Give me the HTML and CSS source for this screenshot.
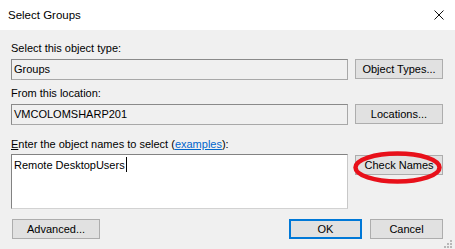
FILE: index.html
```html
<!DOCTYPE html>
<html lang="en">
<head>
  <meta charset="UTF-8">
  <title>Select Groups</title>
  <link rel="stylesheet" href="styles.css">
</head>
<body>
  <div class="window">
    <div class="titlebar">
      <span class="title">Select Groups</span>
      <svg class="close" width="10" height="10" viewBox="0 0 10 10">
        <path d="M0.5 0.5 L9.5 9.5 M9.5 0.5 L0.5 9.5" stroke="#111" stroke-width="1" fill="none"/>
      </svg>
    </div>

    <div class="content">
      <div class="label label-first">Select this object type:</div>
      <div class="row">
        <div class="field readonly">Groups</div>
        <button class="btn">Object Types...</button>
      </div>

      <div class="label label-second">From this location:</div>
      <div class="row">
        <div class="field readonly">VMCOLOMSHARP201</div>
        <button class="btn">Locations...</button>
      </div>

      <div class="label label-third"><u>E</u>nter the object names to select (<a href="#">examples</a>):</div>
      <div class="row row-names">
        <div class="field names">Remote DesktopUsers<span class="caret"></span></div>
        <div class="check-wrap">
          <button class="btn">Check Names</button>
          <svg class="highlight" width="90" height="33" viewBox="0 0 90 33">
            <ellipse cx="44.5" cy="16.5" rx="42" ry="14" fill="none" stroke="#e8101a" stroke-width="4.5"/>
          </svg>
        </div>
      </div>

      <div class="footer">
        <button class="btn advanced">Advanced...</button>
        <div class="actions">
          <button class="btn small ok">OK</button>
          <button class="btn small">Cancel</button>
        </div>
      </div>
    </div>

    <svg class="grip" width="12" height="9" viewBox="0 0 12 9">
      <rect x="8" y="1" width="2" height="2" fill="#b8b8b8"/>
      <rect x="5" y="4" width="2" height="2" fill="#b8b8b8"/>
      <rect x="8" y="4" width="2" height="2" fill="#b8b8b8"/>
      <rect x="2" y="7" width="2" height="2" fill="#b8b8b8"/>
      <rect x="5" y="7" width="2" height="2" fill="#b8b8b8"/>
      <rect x="8" y="7" width="2" height="2" fill="#b8b8b8"/>
    </svg>
  </div>
</body>
</html>
```

FILE: styles.css
```css
* {
  margin: 0;
  padding: 0;
  box-sizing: border-box;
}

body {
  font-family: 'Liberation Sans', Arial, sans-serif;
  font-size: 11px;
  color: #000000;
  background: #f0f0f0;
}

.window {
  position: relative;
  width: 455px;
  height: 249px;
  overflow: hidden;
  background: #f0f0f0;
}

.titlebar {
  height: 30px;
  background: #ffffff;
  display: flex;
  align-items: center;
  justify-content: space-between;
  padding: 0 11px 0 8px;
}

.title {
  font-size: 11.5px;
}

.content {
  padding: 0 12px 0 11px;
}

.label {
  height: 14px;
  line-height: 14px;
}

.label-first {
  margin-top: 11px;
}

.label-second {
  margin-top: 6px;
}

.label-third {
  margin-top: 12px;
}

.label a {
  color: #0066cc;
  text-decoration: underline;
}

.row {
  display: flex;
  justify-content: space-between;
  align-items: flex-start;
  margin-top: 4px;
}

.row-names {
  margin-top: 3px;
}

.field {
  width: 337px;
  height: 21px;
  line-height: 19px;
  padding-left: 2px;
  border: 1px solid #8a8a8a;
  border-right-color: #a8a8a8;
  border-bottom-color: #a8a8a8;
}

.field.readonly {
  background: #f0f0f0;
}

.field.names {
  height: 55px;
  line-height: 16px;
  padding-top: 2px;
  background: #ffffff;
  border-color: #828282 #c8c8c8 #d2d2d2 #828282;
}

.caret {
  display: inline-block;
  width: 1px;
  height: 15px;
  margin-left: 1px;
  background: #000000;
  vertical-align: -3px;
}

.btn {
  width: 88px;
  height: 20px;
  font-family: inherit;
  font-size: 11px;
  color: #000000;
  background: #e1e1e1;
  border: 1px solid #adadad;
}

.check-wrap {
  position: relative;
  margin-top: 1px;
}

.highlight {
  position: absolute;
  left: -2px;
  top: -4px;
}

.footer {
  display: flex;
  justify-content: space-between;
  margin-top: 10px;
}

.advanced {
  margin-left: 1px;
}

.actions {
  display: flex;
  gap: 8px;
}

.btn.small {
  width: 73px;
}

.btn.ok {
  border: 2px solid #0078d7;
}

.grip {
  position: absolute;
  right: 1px;
  bottom: 1px;
}
```
